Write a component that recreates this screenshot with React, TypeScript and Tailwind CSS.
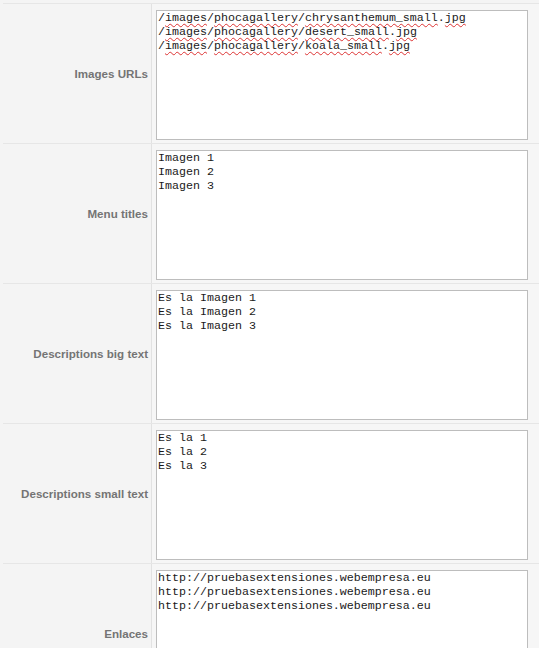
import React from "react";

type Row = { label: string; lines: string[]; spell?: boolean };

const rows: Row[] = [
  {
    label: "Images URLs",
    lines: [
      "/images/phocagallery/chrysanthemum_small.jpg",
      "/images/phocagallery/desert_small.jpg",
      "/images/phocagallery/koala_small.jpg",
    ],
    spell: true,
  },
  { label: "Menu titles", lines: ["Imagen 1", "Imagen 2", "Imagen 3"] },
  {
    label: "Descriptions big text",
    lines: ["Es la Imagen 1", "Es la Imagen 2", "Es la Imagen 3"],
  },
  { label: "Descriptions small text", lines: ["Es la 1", "Es la 2", "Es la 3"] },
  {
    label: "Enlaces",
    lines: [
      "http://pruebasextensiones.webempresa.eu",
      "http://pruebasextensiones.webempresa.eu",
      "http://pruebasextensiones.webempresa.eu",
    ],
  },
];

const sq = "underline decoration-wavy decoration-[#d33] decoration-1 underline-offset-[2px]";

function SpellLine({ text }: { text: string }) {
  const parts = text.split(/([\/.])/);
  return (
    <div>
      {parts.map((p, i) =>
        p === "/" || p === "." || p === "" ? (
          <span key={i}>{p}</span>
        ) : (
          <span key={i} className={sq}>
            {p}
          </span>
        )
      )}
    </div>
  );
}

export default function App() {
  return (
    <div className="w-[539px] h-[648px] overflow-hidden bg-[#f4f4f4] pt-[3px]">
      {rows.map((r) => (
        <div key={r.label} className="ml-[3px] flex border-t border-[#e6e6e6] h-[140px] shrink-0">
          <div className="w-[149px] shrink-0 border-r border-[#e2e2e2] flex items-center justify-end pr-[3px] pt-[1px]">
            <span
              className="text-[11.6px] font-bold text-[#747474] whitespace-nowrap"
              style={{ fontFamily: '"Liberation Sans", Arial, sans-serif' }}
            >
              {r.label}
            </span>
          </div>
          <div className="flex-1 bg-[#f6f6f6] pl-[4px] pt-[6px] pr-[11px]">
            <div
              className="h-[130px] bg-white border border-[#bdbdbd] pl-[1px] pt-[0px] text-[11.67px] leading-[14px] text-[#1a1a1a] whitespace-pre"
              style={{ fontFamily: '"Liberation Mono", "Courier New", monospace' }}
            >
              {r.lines.map((l, i) =>
                r.spell ? <SpellLine key={i} text={l} /> : <div key={i}>{l}</div>
              )}
            </div>
          </div>
        </div>
      ))}
    </div>
  );
}
